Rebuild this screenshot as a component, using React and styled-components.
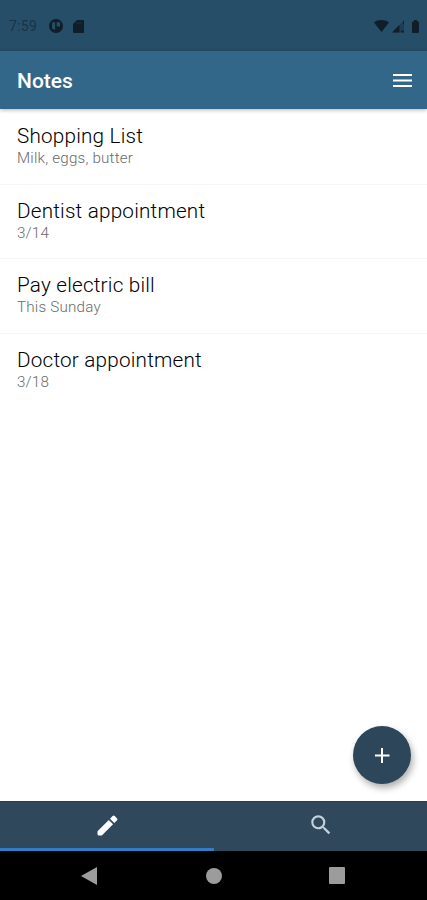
import React, { useState } from 'react';
import styled, { createGlobalStyle } from 'styled-components';

const GlobalStyle = createGlobalStyle`
  * { box-sizing: border-box; }
  body {
    margin: 0;
    background: #fff;
    font-family: Roboto, "Liberation Sans", sans-serif;
  }
`;

const Screen = styled.div`
  position: relative;
  display: flex;
  flex-direction: column;
  width: 427px;
  height: 900px;
  overflow: hidden;
  background: #fff;
`;

const StatusBar = styled.div`
  display: flex;
  align-items: center;
  justify-content: space-between;
  height: 51px;
  padding: 1px 6px 0 9px;
  background: #264e68;
  color: #101e2a;
`;

const StatusGroup = styled.div`
  display: flex;
  align-items: center;
  gap: ${props => props.$gap}px;
`;

const Clock = styled.span`
  width: 28px;
  margin-right: 2px;
  color: #173447;
  font-size: 14px;
  letter-spacing: 0.3px;
  white-space: nowrap;
`;

const AppBar = styled.header`
  position: relative;
  display: flex;
  align-items: center;
  justify-content: space-between;
  height: 58px;
  padding: 0 15px 0 17px;
  background: #336789;
  box-shadow: 0 1px 4px rgba(0, 0, 0, 0.3);
  color: #fff;
`;

const Title = styled.h1`
  margin: 2px 0 0;
  font-size: 21px;
  font-weight: 500;
  line-height: 24px;
`;

const MenuButton = styled.button`
  display: flex;
  padding: 0;
  border: 0;
  background: none;
  color: #fff;
`;

const NoteList = styled.ul`
  flex: 1;
  margin: 0;
  padding: 1px 0 0;
  list-style: none;
`;

const Note = styled.li`
  height: 74.6px;
  padding: 14px 17px 0;
  border-bottom: 1px solid ${props => (props.$last ? 'transparent' : '#f6f6f6')};
`;

const NoteTitle = styled.div`
  color: #000;
  font-size: 20.7px;
  font-weight: 300;
  line-height: 24px;
  letter-spacing: 0.2px;
`;

const NoteText = styled.div`
  color: #6a6a6a;
  font-size: 15.2px;
  font-weight: 300;
  line-height: 20px;
  letter-spacing: 0.2px;
`;

const AddButton = styled.button`
  position: absolute;
  right: 16px;
  bottom: 116px;
  display: flex;
  align-items: center;
  justify-content: center;
  width: 58px;
  height: 58px;
  padding: 0;
  border: 0;
  border-radius: 50%;
  background: #2e465a;
  box-shadow: 2px 4px 7px rgba(0, 0, 0, 0.32);
`;

const Tabs = styled.div`
  display: flex;
  height: 50px;
  background: #2f485c;
  border-top: 1px solid #1b4650;
`;

const Tab = styled.button`
  flex: 1;
  display: flex;
  align-items: center;
  justify-content: center;
  padding: 0 0 0 1px;
  border: 0;
  border-bottom: 3px solid ${props => (props.$active ? '#2f7fc6' : 'transparent')};
  background: none;
  color: ${props => (props.$active ? '#fff' : '#c6d0d8')};
`;

const NavBar = styled.div`
  display: flex;
  align-items: center;
  justify-content: space-between;
  height: 49px;
  padding: 0 82px 0 81px;
  background: #000;
  color: #9c9c9c;
`;

const notes = [
  { id: 1, title: 'Shopping List', text: 'Milk, eggs, butter' },
  { id: 2, title: 'Dentist appointment', text: '3/14' },
  { id: 3, title: 'Pay electric bill', text: 'This Sunday' },
  { id: 4, title: 'Doctor appointment', text: '3/18' },
];

const App = () => {
  const [tab, setTab] = useState('edit')

  return (
    <Screen>
      <GlobalStyle />
      <StatusBar>
        <StatusGroup $gap={10}>
          <Clock>7:59</Clock>
          <svg width="14" height="14" viewBox="0 0 14 14">
            <circle cx="7" cy="7" r="7" fill="currentColor" />
            <path d="M3.2 3.3h2.9v7.6L3 9.4zM7.7 3.3h3.3v4.2H7.7z" fill="#264e68" />
          </svg>
          <svg width="11" height="13" viewBox="0 0 11 13">
            <path d="M4 0h6a1 1 0 0 1 1 1v11a1 1 0 0 1-1 1H1a1 1 0 0 1-1-1V4z" fill="currentColor" />
            <path d="M4 2v2M6 2v2M8 2v2" stroke="#264e68" strokeWidth="0.4" />
          </svg>
        </StatusGroup>
        <StatusGroup $gap={3}>
          <svg width="15" height="12" viewBox="0 0 15 12">
            <path d="M0 2.4C4.3-.8 10.7-.8 15 2.4L7.5 12z" fill="currentColor" />
          </svg>
          <svg width="12" height="13" viewBox="0 0 13 13">
            <path d="M0 13L13 0v13z" fill="currentColor" opacity="0.35" />
            <path d="M0 13l8-8v8zM10 11h3v2h-3zM12 1l1-1v4h-1z" fill="currentColor" />
          </svg>
          <svg width="14" height="13" viewBox="0 0 14 13">
            <path d="M6 0h3v1.2h.7Q11 1.5 11 2.6V12q0 1-1 1H5q-1 0-1-1V2.6q0-1.1 1.3-1.4H6z" transform="translate(1 0)" fill="currentColor" />
          </svg>
        </StatusGroup>
      </StatusBar>
      <AppBar>
        <Title>Notes</Title>
        <MenuButton aria-label="Menu">
          <svg width="19" height="13" viewBox="0 0 19 13">
            <path d="M0 1h19M0 6.5h19M0 12h19" stroke="currentColor" strokeWidth="2" />
          </svg>
        </MenuButton>
      </AppBar>
      <NoteList>
        {notes.map((note, index) => (
          <Note key={note.id} $last={index === notes.length - 1}>
            <NoteTitle>{note.title}</NoteTitle>
            <NoteText>{note.text}</NoteText>
          </Note>
        ))}
      </NoteList>
      <AddButton aria-label="Add note">
        <svg width="15" height="15" viewBox="0 0 15 15">
          <path d="M7 0v15M0 7.5h14.5" stroke="#fff" strokeWidth="2" />
        </svg>
      </AddButton>
      <Tabs>
        <Tab $active={tab === 'edit'} onClick={() => setTab('edit')} aria-label="Edit">
          <svg width="21" height="21" viewBox="0 0 21 21">
            <path
              d="M.5 16.2L11.8 4.9l4.3 4.3L4.8 20.5H2Q.5 20.5.5 19z"
              fill="currentColor"
            />
            <path
              d="M13 3.7L15.6 1.1q1-1 2.1 0l2.2 2.2q1 1 0 2.1L17.3 8z"
              fill="currentColor"
            />
          </svg>
        </Tab>
        <Tab $active={tab === 'search'} onClick={() => setTab('search')} aria-label="Search">
          <svg width="26" height="26" viewBox="0 0 24 24">
            <path
              d="M15.5 14h-.79l-.28-.27A6.47 6.47 0 0 0 16 9.5 6.5 6.5 0 1 0 9.5 16c1.61 0 3.09-.59 4.23-1.57l.27.28v.79l5 4.99L20.49 19zm-6 0C7.01 14 5 11.99 5 9.5S7.01 5 9.5 5 14 7.01 14 9.5 11.99 14 9.5 14z"
              fill="currentColor"
            />
          </svg>
        </Tab>
      </Tabs>
      <NavBar>
        <svg width="16" height="18" viewBox="0 0 16 18">
          <path d="M16 0v18L0 9z" fill="currentColor" />
        </svg>
        <svg width="17" height="16" viewBox="0 0 17 16">
          <circle cx="9" cy="8" r="8" fill="currentColor" />
        </svg>
        <svg width="16" height="17" viewBox="0 0 16 17">
          <rect width="16" height="17" rx="1" fill="currentColor" />
        </svg>
      </NavBar>
    </Screen>
  );
}

export default App;
